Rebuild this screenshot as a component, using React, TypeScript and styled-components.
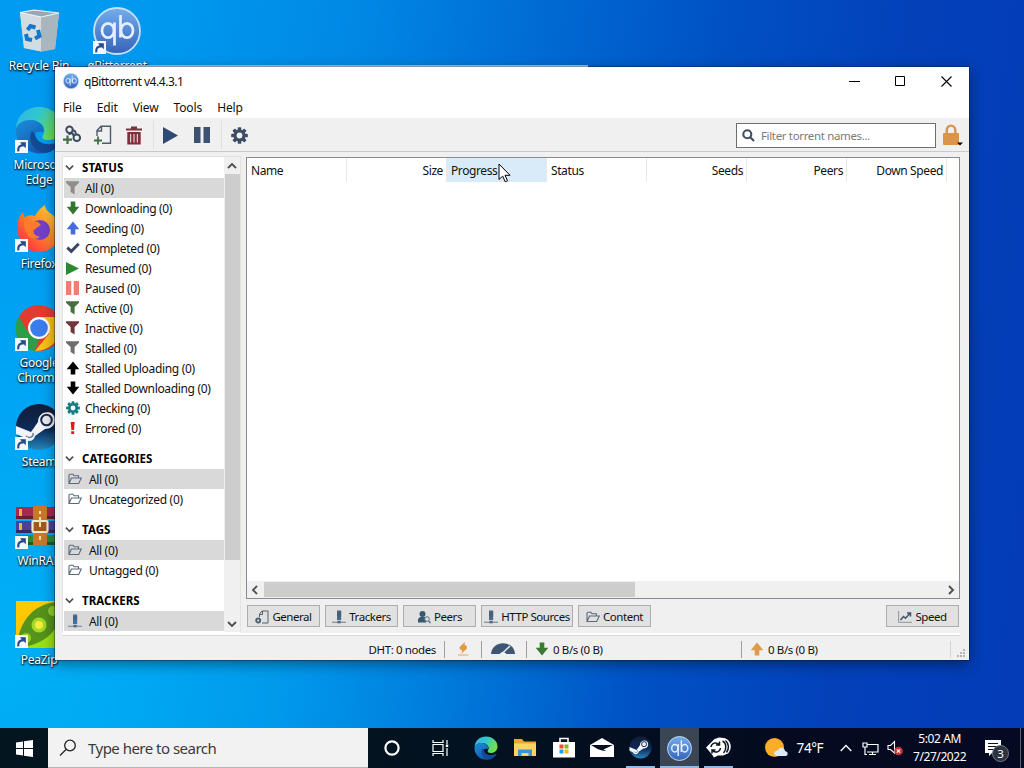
import React from "react";
import styled, { createGlobalStyle } from "styled-components";

const Global = createGlobalStyle`
  * { box-sizing: border-box; }
  html, body { margin: 0; padding: 0; width: 1024px; height: 768px; overflow: hidden; }
  body { font-family: "Noto Sans", "Open Sans", sans-serif; font-size: 12px; color: #111; }
  svg { display: block; flex: none; }
`;

/* ---------- desktop ---------- */
const Screen = styled.div`
  width: 1024px;
  height: 768px;
  display: flex;
  flex-direction: column;
  overflow: hidden;
`;
const Desktop = styled.main`
  position: relative;
  flex: 1;
  overflow: hidden;
  background: linear-gradient(97deg, #009cf2 0%, #0098ef 16%, #0087e4 33%, #0069d2 50%, #0050c3 66%, #0341b9 82%, #033cb6 100%);
  &::before {
    content: "";
    position: absolute;
    inset: 0;
    background: radial-gradient(ellipse 620px 520px at 0px 660px, rgba(0, 190, 250, 0.6), rgba(0, 180, 245, 0));
  }
`;
const Shortcut = styled.div<{ $x: number; $y: number }>`
  position: absolute;
  left: ${(p) => p.$x}px;
  top: ${(p) => p.$y}px;
  width: 78px;
  display: flex;
  flex-direction: column;
  align-items: center;
  gap: 3px;
`;
const ShortcutArt = styled.div`
  position: relative;
  width: 48px;
  height: 48px;
`;
const ArrowBadge = styled.svg`
  position: absolute;
  left: 0;
  bottom: 1px;
`;
const ShortcutLabel = styled.div`
  color: #fff;
  font-size: 12px;
  line-height: 15px;
  letter-spacing: -0.25px;
  text-align: center;
  white-space: pre-line;
  text-shadow: 0 1px 2px #000, 1px 1px 2px rgba(0, 0, 0, 0.8);
`;
const BackWindowEdge = styled.div`
  position: absolute;
  left: 88px;
  top: 65px;
  width: 500px;
  height: 20px;
  background: #fff;
  border-top: 1px solid #7cc3f0;
`;

/* ---------- application window ---------- */
const Window = styled.section`
  position: absolute;
  left: 55px;
  top: 67px;
  width: 914px;
  height: 593px;
  display: flex;
  flex-direction: column;
  background: #f0f0f0;
  box-shadow: 0 0 0 1px rgba(0, 25, 70, 0.4), 0 4px 13px rgba(0, 0, 0, 0.42);
`;
const TitleBar = styled.header`
  height: 30px;
  display: flex;
  align-items: center;
  gap: 5px;
  padding: 0 0 2px 8px;
  background: #fff;
`;
const Title = styled.div`
  flex: 1;
  letter-spacing: -0.46px;
`;
const CaptionButtons = styled.div`
  display: flex;
`;
const Caption = styled.button`
  width: 46px;
  height: 28px;
  border: 0;
  padding: 0;
  background: none;
  display: grid;
  place-items: center;
`;
const MenuBar = styled.nav`
  height: 21px;
  display: flex;
  align-items: center;
  gap: 15px;
  padding-left: 8px;
  background: #fff;
  letter-spacing: -0.12px;
`;
const ToolBar = styled.div`
  height: 34px;
  display: flex;
  align-items: center;
  padding: 1px 6px 0 7px;
  border-bottom: 1px solid #c9c9c9;
`;
const Tool = styled.div<{ $w: number }>`
  width: ${(p) => p.$w}px;
  display: flex;
`;
const ToolRule = styled.div`
  width: 1px;
  height: 28px;
  margin-right: 9px;
  background: #e0e0e0;
`;
const Filter = styled.div`
  width: 200px;
  height: 25px;
  margin-left: auto;
  display: flex;
  align-items: center;
  gap: 6px;
  padding-left: 5px;
  border: 1px solid #6e6e6e;
  background: #fff;
  color: #7a7a7a;
  font-size: 11.5px;
  letter-spacing: -0.35px;
`;
const LockButton = styled.div`
  width: 21px;
  margin-left: 6px;
`;
const Body = styled.div`
  height: 481px;
  display: flex;
  padding: 5px 9px 0 7px;
`;

/* ---------- sidebar ---------- */
const Sidebar = styled.aside`
  width: 179px;
  height: 477px;
  margin-top: -1px;
  display: flex;
  border: 1px solid #e2e2e2;
  border-bottom-color: #fff;
  background: #fff;
`;
const Groups = styled.div`
  width: 161px;
  padding: 1px 0 0 1px;
  display: flex;
  flex-direction: column;
  gap: 11px;
`;
const GroupTitle = styled.div`
  height: 20px;
  display: flex;
  align-items: center;
  gap: 8px;
  padding: 0 0 2px 1px;
  font-weight: 700;
  font-size: 11.5px;
  letter-spacing: 0.05px;
  color: #000;
`;
const Row = styled.div<{ $selected?: boolean; $wide?: boolean }>`
  height: 20px;
  display: flex;
  align-items: center;
  gap: ${(p) => (p.$wide ? 7 : 5)}px;
  padding-left: ${(p) => (p.$wide ? 4 : 1)}px;
  background: ${(p) => (p.$selected ? "#d9d9d9" : "transparent")};
  letter-spacing: -0.34px;
  white-space: nowrap;
`;
const VScroll = styled.div`
  width: 16px;
  display: flex;
  flex-direction: column;
  align-items: center;
  background: #f0f0f0;
`;
const VThumb = styled.div`
  width: 15px;
  height: 386px;
  background: #cdcdcd;
`;
const Arrow = styled.div`
  height: 17px;
  width: 16px;
  display: grid;
  place-items: center;
`;
const Spacer = styled.div`
  flex: 1;
`;
const IconSlot = styled.span`
  width: 15px;
  display: grid;
  place-items: center;
`;

/* ---------- transfer list ---------- */
const Content = styled.div`
  margin-left: 5px;
  width: 714px;
`;
const Table = styled.div`
  height: 442px;
  display: flex;
  flex-direction: column;
  border: 1px solid #868b92;
  background: #fff;
`;
const HeadRow = styled.div`
  flex: 1;
  display: flex;
`;
const HeadCell = styled.div<{ $right?: boolean; $hover?: boolean }>`
  width: 100px;
  height: 24px;
  padding: 0 3px 0 4px;
  display: flex;
  align-items: center;
  justify-content: ${(p) => (p.$right ? "flex-end" : "flex-start")};
  background: ${(p) => (p.$hover ? "#d9ebf9" : "#fff")};
  border-right: 1px solid #e8e8e8;
  letter-spacing: -0.4px;
`;
const HScroll = styled.div`
  height: 17px;
  display: flex;
  align-items: center;
  justify-content: space-between;
  background: #f0f0f0;
`;
const HThumb = styled.div`
  width: 371px;
  height: 15px;
  margin: 0 auto 0 1px;
  background: #cdcdcd;
`;
const Tabs = styled.div`
  display: flex;
  gap: 5px;
  padding: 6px 1px 0 1px;
`;
const Tab = styled.button<{ $w?: number; $end?: boolean }>`
  width: ${(p) => p.$w ?? 73}px;
  height: 22px;
  margin-left: ${(p) => (p.$end ? "auto" : "0")};
  display: flex;
  align-items: center;
  justify-content: center;
  gap: 3px;
  padding: 1px 0 0;
  border: 1px solid #adadad;
  background: #e1e1e1;
  color: #111;
  font: inherit;
  font-size: 11.5px;
  letter-spacing: -0.45px;
  white-space: nowrap;
`;

/* ---------- status bar ---------- */
const StatusRule = styled.div`
  height: 3px;
  margin: 0 9px 0 7px;
  background: #fff;
  border-bottom: 1px solid #d8d8d8;
`;
const StatusBar = styled.footer`
  flex: 1;
  display: flex;
  align-items: center;
  padding: 2px 3px 0 0;
`;
const Status = styled.div<{ $w: number; $right?: boolean; $faint?: boolean }>`
  width: ${(p) => p.$w}px;
  height: 17px;
  display: flex;
  align-items: center;
  gap: 4px;
  padding: 0 8px;
  justify-content: ${(p) => (p.$right ? "flex-end" : "flex-start")};
  border-right: 1px solid ${(p) => (p.$faint ? "#d4d4d4" : "#a0a0a0")};
  font-size: 11.5px;
  letter-spacing: -0.38px;
`;

/* ---------- taskbar ---------- */
const TaskBar = styled.footer`
  height: 40px;
  display: flex;
  background: linear-gradient(90deg, #03151f 0%, #031220 45%, #040b20 75%, #030a22 100%);
  color: #fff;
`;
const TaskCell = styled.div<{ $w: number; $open?: boolean; $active?: boolean }>`
  width: ${(p) => p.$w}px;
  display: grid;
  place-items: center;
  background: ${(p) => (p.$active ? "#3a4653" : "transparent")};
  box-shadow: ${(p) => (p.$active ? "inset 0 -2px 0 #8abbea" : "none")};
  &::after {
    content: "";
    display: ${(p) => (p.$open ? "block" : "none")};
    width: 29px;
    height: 2px;
    background: #8abbea;
    align-self: end;
  }
  ${(p) => (p.$open ? "grid-template-rows: 38px 2px;" : "")}
`;
const Search = styled.div`
  width: 320px;
  display: flex;
  align-items: center;
  gap: 11px;
  padding-left: 11px;
  background: #f2f2f2;
  border-bottom: 1px solid #b5b5b5;
  color: #3a3a3a;
  font-size: 15px;
  letter-spacing: -0.52px;
`;
const Apps = styled.div`
  display: flex;
  padding-left: 3px;
`;
const Tray = styled.div`
  flex: 1;
  display: flex;
  align-items: center;
  padding-left: 26px;
`;
const Temp = styled.div`
  width: 44px;
  padding-left: 9px;
  font-size: 13.5px;
  letter-spacing: -0.4px;
  white-space: nowrap;
`;
const TrayIcon = styled.div<{ $w: number; $end?: boolean }>`
  width: ${(p) => p.$w}px;
  display: grid;
  align-items: center;
  justify-items: ${(p) => (p.$end ? "end" : "center")};
`;
const Clock = styled.div`
  width: 64px;
  text-align: center;
  font-size: 12px;
  line-height: 18px;
  letter-spacing: -0.42px;
  white-space: nowrap;
`;
const Peek = styled.div`
  width: 1px;
  height: 40px;
  margin-left: 10px;
  background: #5b6272;
`;
const Pointer = styled.svg`
  position: absolute;
  left: 498px;
  top: 163px;
`;

/* ---------- icons ---------- */
const Chevron = ({ d = "down", s = 10, c = "#505050" }: { d?: string; s?: number; c?: string }) => {
  const paths: Record<string, string> = {
    down: "M1 3l4 4 4-4",
    up: "M1 7l4-4 4 4",
    left: "M7 1L3 5l4 4",
    right: "M3 1l4 4-4 4",
  };
  return (
    <svg width={s} height={s} viewBox="0 0 10 10" fill="none" stroke={c} strokeWidth="1.9">
      <path d={paths[d]} />
    </svg>
  );
};
const Funnel = ({ c }: { c: string }) => (
  <svg width="15" height="16" viewBox="0 0 15 16" fill={c}>
    <path d="M1 1.200h13v1.600L9.600 7v7.500L5.600 12V7L1 2.800z" />
  </svg>
);
const FatArrow = ({ c, up, s = 14 }: { c: string; up?: boolean; s?: number }) => (
  <svg width={s} height={s} viewBox="0 0 14 14" fill={c}>
    <path d="M4.700.5h4.600v5.300H13.300L7 13.500.7 5.800h4z" transform={up ? "rotate(180 7 7)" : undefined} />
  </svg>
);
const Gear = ({ c, s, hole }: { c: string; s: number; hole: string }) => (
  <svg width={s} height={s} viewBox="-10 -10 20 20">
    <g fill={c}>
      {[0, 45, 90, 135].map((a) => (
        <rect key={a} x="-2.100" y="-9.800" width="4.200" height="19.600" rx="1" transform={`rotate(${a})`} />
      ))}
    </g>
    <circle r="5" fill="none" stroke={c} strokeWidth="4" />
    <circle r="3.400" fill={hole} />
  </svg>
);
const Check = () => (
  <svg width="14" height="14" viewBox="0 0 14 14">
    <path d="M1.300 6.600l4 3.800 7.400-7.600" fill="none" stroke="#3d4763" strokeWidth="3" />
  </svg>
);
const Play = ({ c, w, h }: { c: string; w: number; h: number }) => (
  <svg width={w} height={h} viewBox="0 0 14 14" preserveAspectRatio="none" fill={c}>
    <path d="M0 0l14 7L0 14z" />
  </svg>
);
const Pause = ({ c, w, h }: { c: string; w: number; h: number }) => (
  <svg width={w} height={h} viewBox="0 0 14 14" preserveAspectRatio="none" fill={c}>
    <path d="M0 0h5.700v14H0zM8.300 0H14v14H8.300z" />
  </svg>
);
const Bang = () => (
  <svg width="15" height="14" viewBox="0 0 15 14" fill="#e0191f">
    <path d="M5.700 1h4l-.7 8H6.400zM6.200 10.300h3v2.700h-3z" />
  </svg>
);
const Folder = () => (
  <svg width="14" height="12" viewBox="0 0 14 12" fill="none" stroke="#5a6a7c" strokeWidth="1.100">
    <path d="M1 10V2.200l1-1h3l1 1.500h4.500V5M1 10.500L3.500 5H13.300l-2.600 5.500z" />
  </svg>
);
const Tracker = ({ c = "#41719f" }: { c?: string }) => (
  <svg width="14" height="14" viewBox="0 0 14 14">
    <path d="M5 .500h4.200v9.500H5z" fill={c} />
    <path d="M5 3h4.200M5 5h4.200" stroke="#345778" strokeWidth=".7" />
    <path d="M0 12.300h14" stroke="#8195a8" strokeWidth="1.300" />
    <path d="M5.500 10.800h3.200v2.500H5.500z" fill="#4d6781" />
  </svg>
);
const AddLink = () => (
  <svg width="20" height="20" viewBox="0 0 20 20" fill="none">
    <g stroke="#3c4a61" strokeWidth="2">
      <circle cx="7.500" cy="4.800" r="3.200" />
      <circle cx="14.800" cy="12.800" r="3.300" />
      <path d="M7.500 10c0-2.500 4-2.500 4 1M10.500 5.500c3 0 3.500 1.500 3 3.500" />
    </g>
    <path d="M5.500 10.500v8.500M1 14.700h9" stroke="#3e7048" strokeWidth="2.200" />
  </svg>
);
const AddFile = () => (
  <svg width="20" height="20" viewBox="0 0 20 20" fill="none">
    <path d="M3 11V5.500L7 1.200h9.500v17H8M3 6h4.500V1.500" stroke="#4c5c6c" strokeWidth="1.400" />
    <path d="M4 11.500v8M0 15.500h8" stroke="#3e7048" strokeWidth="1.800" />
  </svg>
);
const Trash = () => (
  <svg width="16" height="19" viewBox="0 0 16 19" fill="#80303c">
    <path d="M0 2.500h5V.5h6v2h5v2H0zM1.300 6h13.400v12.500H1.300z" />
    <path d="M4.600 8v8.500M8 8v8.500M11.400 8v8.500" stroke="#e3d0d3" strokeWidth="1.200" />
  </svg>
);
const Magnifier = () => (
  <svg width="13" height="13" viewBox="0 0 13 13" fill="none" stroke="#3f4e63" strokeWidth="2.100">
    <circle cx="5.300" cy="5.300" r="4" />
    <path d="M8.200 8.200l3.800 3.800" />
  </svg>
);
const Lock = () => (
  <svg width="21" height="22" viewBox="0 0 21 22">
    <path d="M4.700 10V6.500C4.700 0 13.300 0 13.300 6.500V10" fill="none" stroke="#d9934a" strokeWidth="2.400" />
    <rect x="1" y="9" width="16" height="12" rx="1" fill="#dc944b" />
    <path d="M15 18.500h6l-3 3z" fill="#000" />
  </svg>
);
const QbLogo = ({ s }: { s: number }) => (
  <svg width={s} height={s} viewBox="0 0 48 48">
    <defs>
      <linearGradient id="qb" x1="0" y1="0" x2="0" y2="1">
        <stop offset="0" stopColor="#73adee" />
        <stop offset="1" stopColor="#3563b8" />
      </linearGradient>
    </defs>
    <circle cx="24" cy="24" r="23" fill="url(#qb)" stroke="#c5e0fa" strokeWidth="1.800" />
    <g fill="none" stroke="#e4f0ff" strokeWidth="2.700">
      <ellipse cx="15" cy="23.500" rx="6" ry="7.200" />
      <path d="M21.500 15.500v23M27.500 8v22.500" />
      <ellipse cx="34" cy="23.500" rx="6" ry="7.200" />
    </g>
  </svg>
);
const EdgeLogo = ({ s }: { s: number }) => (
  <svg width={s} height={s} viewBox="0 0 48 48">
    <defs>
      <linearGradient id="e1" x1="0" y1="0" x2="1" y2=".4">
        <stop offset="0" stopColor="#2bb5e8" />
        <stop offset=".5" stopColor="#31c7cf" />
        <stop offset="1" stopColor="#6ee04c" />
      </linearGradient>
      <linearGradient id="e2" x1="0" y1="0" x2=".6" y2="1">
        <stop offset="0" stopColor="#1b8fdd" />
        <stop offset="1" stopColor="#1557ad" />
      </linearGradient>
    </defs>
    <path d="M1 22C2 9 12 1 24 1c13 0 23 9 23 20 0 8-6 13-13 13-6 0-8-2-6-5 5-8-4-15-12-15C8 14 3 18 1 22z" fill="url(#e1)" />
    <path d="M1 23c2-6 8-9 14-9 9 0 15 6 13 12-9-2-14 5-10 12 3 5 8 8 13 9C15 50 0 39 1 23z" fill="url(#e2)" />
    <path d="M17 25c-5 9 1 21 14 22 6-1 11-5 14-10 1-2-1-2-2-1-11 5-22 1-23-8z" fill="#124993" />
  </svg>
);
const SteamLogo = ({ s }: { s: number }) => (
  <svg width={s} height={s} viewBox="0 0 48 48">
    <defs>
      <linearGradient id="st" x1="0" y1="0" x2="0" y2="1">
        <stop offset="0" stopColor="#101d38" />
        <stop offset=".55" stopColor="#0c2a58" />
        <stop offset="1" stopColor="#2587bd" />
      </linearGradient>
    </defs>
    <circle cx="24" cy="24" r="23" fill="url(#st)" />
    <path d="M1 23l15 6 7-10c0-12 17-13 17-2 0 6-5 9-10 9l-10 7c-1 6-9 7-12 1L1 31z" fill="#f1f3f6" />
    <circle cx="31.500" cy="17" r="5.300" fill="#e9edf2" stroke="#17294d" strokeWidth="2" />
    <path d="M11 33c3 3 8 1 7-3" fill="none" stroke="#6d7a90" strokeWidth="1.500" />
  </svg>
);
const RecycleBin = () => (
  <svg width="48" height="48" viewBox="0 0 48 48">
    <path d="M5 5.500L19 3l25 3-4 36-13 2.500L9 41z" fill="#c4ced4" />
    <path d="M5 5.500l21 4.500v34.500L9 41z" fill="#d3dce1" />
    <path d="M26 10l18-4-4 36-14 2.500z" fill="#a9b6be" />
    <path d="M5 5.500L19 3l25 3-18 4z" fill="#9aa8b0" stroke="#eef4f7" strokeWidth="1.200" />
    <path d="M12.500 23l3-4 5 1.500M23 23l1.500 6-4.500 2.500M17 33l-5-1-1-5" fill="none" stroke="#1477c9" strokeWidth="4" />
  </svg>
);
const FirefoxLogo = () => (
  <svg width="48" height="48" viewBox="0 0 48 48">
    <defs>
      <linearGradient id="ff" x1="1" y1="0" x2="0" y2="1">
        <stop offset="0" stopColor="#ffe04a" />
        <stop offset=".4" stopColor="#ff9a29" />
        <stop offset=".75" stopColor="#ff4b3a" />
        <stop offset="1" stopColor="#e8237d" />
      </linearGradient>
    </defs>
    <path d="M3 16c1-4 3-7 5-9 0 3 1 4 2 5 4-2 7-2 10-1 3-6 7-9 10-11 0 7 8 8 13 16 7 14-2 31-19 31C9 47 0 33 3 16z" fill="url(#ff)" />
    <circle cx="25" cy="25" r="10" fill="#7340c9" />
    <path d="M9 14c8 0 9 3 14 3l3 3-6 4c-4 3 0 7 5 8-9 5-17-2-16-18z" fill="#ff7b2b" />
  </svg>
);
const ChromeLogo = () => (
  <svg width="48" height="48" viewBox="0 0 48 48">
    <circle cx="24" cy="24" r="23" fill="#e33b2e" />
    <path d="M4 12.500L14 30l10 5-4 12C3 45-4 26 4 12.500z" fill="#2a9e48" />
    <path d="M24 13h20.200C51 29 39 47 20 47l14-17z" fill="#fbc116" />
    <circle cx="24" cy="24" r="11" fill="#fff" />
    <circle cx="24" cy="24" r="8.800" fill="#3b7ded" />
  </svg>
);
const WinrarLogo = () => (
  <svg width="48" height="48" viewBox="0 0 48 48">
    <path d="M1 5h46v12H1z" fill="#a62a4a" />
    <path d="M1 19h46v12H1z" fill="#4a4298" />
    <path d="M1 33h46v10H1z" fill="#2d8a40" />
    <path d="M1 14h46v3H1zM1 28h46v3H1zM1 40h46v3H1z" fill="#000" opacity=".35" />
    <path d="M4 7h3v7H4zM4 21h3v7H4z" fill="#efb62e" />
    <path d="M18 4h14v39H18z" fill="#c9782a" />
    <rect x="17.500" y="19" width="15" height="11" rx="1" fill="#a05a20" stroke="#f3ead2" strokeWidth="2.200" />
    <path d="M25 9v3M25 15v10M25 34v4" stroke="#f6e0a0" strokeWidth="2" />
  </svg>
);
const PeazipLogo = () => (
  <svg width="48" height="48" viewBox="0 0 48 48">
    <path d="M1 0h47v47H1z" fill="#ffc800" />
    <path d="M1 47L48 0v47z" fill="#9be014" />
    <path d="M1 47C5 18 18 2 48 0c-1 28-16 44-47 47z" fill="#55931a" />
    <circle cx="24" cy="24" r="7.500" fill="#a4d829" />
    <circle cx="24" cy="24" r="4" fill="#f5ed3d" />
    <circle cx="38" cy="10" r="5" fill="#90cb2a" />
    <circle cx="11" cy="37" r="5" fill="#90cb2a" />
  </svg>
);

const shortcuts: { name: string; x: number; y: number; art: React.ReactNode; badge: boolean }[] = [
  { name: "Recycle Bin", x: 0, y: 7, art: <RecycleBin />, badge: false },
  { name: "qBittorrent", x: 78, y: 7, art: <QbLogo s={48} />, badge: true },
  { name: "Microsoft\nEdge", x: 0, y: 106, art: <EdgeLogo s={48} />, badge: true },
  { name: "Firefox", x: 0, y: 205, art: <FirefoxLogo />, badge: true },
  { name: "Google\nChrome", x: 0, y: 304, art: <ChromeLogo />, badge: true },
  { name: "Steam", x: 0, y: 403, art: <SteamLogo s={48} />, badge: true },
  { name: "WinRAR", x: 0, y: 502, art: <WinrarLogo />, badge: true },
  { name: "PeaZip", x: 0, y: 601, art: <PeazipLogo />, badge: true },
];

const statuses: [string, React.ReactNode][] = [
  ["All", <Funnel c="#8f8d86" />],
  ["Downloading", <FatArrow c="#34752f" />],
  ["Seeding", <FatArrow c="#4669e0" up />],
  ["Completed", <Check />],
  ["Resumed", <Play c="#2a8a30" w={13} h={13} />],
  ["Paused", <Pause c="#ee7f73" w={13} h={14} />],
  ["Active", <Funnel c="#45703f" />],
  ["Inactive", <Funnel c="#71353c" />],
  ["Stalled", <Funnel c="#6e6e6e" />],
  ["Stalled Uploading", <FatArrow c="#000" up />],
  ["Stalled Downloading", <FatArrow c="#000" />],
  ["Checking", <Gear c="#137f82" s={14} hole="#fff" />],
  ["Errored", <Bang />],
];

const groups: { title: string; rows: [string, React.ReactNode][] }[] = [
  { title: "CATEGORIES", rows: [["All", <Folder />], ["Uncategorized", <Folder />]] },
  { title: "TAGS", rows: [["All", <Folder />], ["Untagged", <Folder />]] },
  { title: "TRACKERS", rows: [["All", <Tracker />]] },
];

const columns = [
  { name: "Name" },
  { name: "Size", right: true },
  { name: "Progress", hover: true },
  { name: "Status" },
  { name: "Seeds", right: true },
  { name: "Peers", right: true },
  { name: "Down Speed", right: true },
];

const SideGroup = ({ title, children }: { title: string; children: React.ReactNode }) => (
  <div>
    <GroupTitle>
      <Chevron s={9} />
      {title}
    </GroupTitle>
    {children}
  </div>
);

export default function App() {
  return (
    <Screen>
      <Global />
      <Desktop>
        {shortcuts.map((s) => (
          <Shortcut key={s.name} $x={s.x} $y={s.y}>
            <ShortcutArt>
              {s.art}
              {s.badge && (
                <ArrowBadge width="13" height="13" viewBox="0 0 12 12">
                  <path d="M0 0h12v12H0z" fill="#f4f6f8" />
                  <path d="M3 10.500c-.5-4 1.500-5.500 4-5.500V2.500" fill="none" stroke="#24498c" strokeWidth="2" />
                  <path d="M4.500 2H10v5.500z" fill="#24498c" />
                </ArrowBadge>
              )}
            </ShortcutArt>
            <ShortcutLabel>{s.name}</ShortcutLabel>
          </Shortcut>
        ))}
        <BackWindowEdge />

        <Window>
          <TitleBar>
            <QbLogo s={16} />
            <Title>qBittorrent v4.4.3.1</Title>
            <CaptionButtons>
              <Caption>
                <svg width="11" height="11" viewBox="0 0 11 11"><path d="M0 5.500h11" stroke="#000" /></svg>
              </Caption>
              <Caption>
                <svg width="11" height="11" viewBox="0 0 11 11"><path d="M.5.500h9v9h-9z" fill="none" stroke="#000" /></svg>
              </Caption>
              <Caption>
                <svg width="11" height="11" viewBox="0 0 11 11"><path d="M.5.500l10 10M10.500.500l-10 10" stroke="#000" strokeWidth="1.100" /></svg>
              </Caption>
            </CaptionButtons>
          </TitleBar>
          <MenuBar>
            {["File", "Edit", "View", "Tools", "Help"].map((m) => (
              <span key={m}>{m}</span>
            ))}
          </MenuBar>
          <ToolBar>
            <Tool $w={32}><AddLink /></Tool>
            <Tool $w={32}><AddFile /></Tool>
            <Tool $w={27}><Trash /></Tool>
            <ToolRule />
            <Tool $w={31}><Play c="#304a73" w={15} h={17} /></Tool>
            <Tool $w={27}><Pause c="#3d5273" w={16} h={16} /></Tool>
            <ToolRule />
            <Tool $w={20}><Gear c="#3d4c64" s={17} hole="#f0f0f0" /></Tool>
            <Filter>
              <Magnifier />
              Filter torrent names...
            </Filter>
            <LockButton><Lock /></LockButton>
          </ToolBar>

          <Body>
            <Sidebar>
              <Groups>
                <SideGroup title="STATUS">
                  {statuses.map(([name, icon], i) => (
                    <Row key={name} $selected={i === 0}>
                      <IconSlot>{icon}</IconSlot>
                      {name} (0)
                    </Row>
                  ))}
                </SideGroup>
                {groups.map((g) => (
                  <SideGroup key={g.title} title={g.title}>
                    {g.rows.map(([name, icon], i) => (
                      <Row key={name} $selected={i === 0} $wide>
                        {icon}
                        {name} (0)
                      </Row>
                    ))}
                  </SideGroup>
                ))}
              </Groups>
              <VScroll>
                <Arrow><Chevron d="up" /></Arrow>
                <VThumb />
                <Spacer />
                <Arrow><Chevron /></Arrow>
              </VScroll>
            </Sidebar>
            <Content>
              <Table>
                <HeadRow>
                  {columns.map((c) => (
                    <HeadCell key={c.name} $right={c.right} $hover={c.hover}>{c.name}</HeadCell>
                  ))}
                </HeadRow>
                <HScroll>
                  <Arrow><Chevron d="left" /></Arrow>
                  <HThumb />
                  <Arrow><Chevron d="right" /></Arrow>
                </HScroll>
              </Table>
              <Tabs>
                <Tab>
                  <svg width="14" height="14" viewBox="0 0 14 14" fill="none" stroke="#4f6070">
                    <path d="M4.500 7V4L7 1h6v12H7M5 4.500h2.500V1" />
                    <circle cx="3.200" cy="10.500" r="2" strokeWidth="1.900" />
                  </svg>
                  General
                </Tab>
                <Tab><Tracker c="#4d6781" />Trackers</Tab>
                <Tab>
                  <svg width="14" height="14" viewBox="0 0 14 14" fill="#355a70">
                    <circle cx="5.500" cy="4" r="3" />
                    <path d="M1 12.500V9l2-2h5l1 1v4.500z" />
                    <circle cx="10" cy="9" r="2.300" fill="#dfe6ea" stroke="#5b7383" />
                    <path d="M11.500 11l2 2" stroke="#5b7383" strokeWidth="1.400" />
                  </svg>
                  Peers
                </Tab>
                <Tab $w={92}><Tracker c="#4d6781" />HTTP Sources</Tab>
                <Tab><Folder />Content</Tab>
                <Tab $end>
                  <svg width="14" height="12" viewBox="0 0 14 12" fill="none" stroke="#44546a">
                    <path d="M.6 0v11.300H14" stroke="#8a94a0" />
                    <path d="M2.500 9l3-3.500 2 1.800 4.500-5M9 2h3.500v3.500" strokeWidth="1.500" />
                  </svg>
                  Speed
                </Tab>
              </Tabs>
            </Content>
          </Body>

          <StatusRule />
          <StatusBar>
            <Status $w={390} $right>DHT: 0 nodes</Status>
            <Status $w={37}>
              <svg width="20" height="16" viewBox="0 0 20 16" fill="#e49a43">
                <path d="M12 1L6.500 6l.500 2.500 2 .500L8.500 12.500 14 7.500 13.500 4.500 11.500 4z" />
                <path d="M5 14h10.500" stroke="#e8b878" strokeWidth="1.300" />
              </svg>
            </Status>
            <Status $w={45}>
              <svg width="26" height="14" viewBox="0 0 26 14">
                <path d="M1 12C2-2.500 24-2.500 25 12z" fill="#3c5674" />
                <path d="M12 11.500L20 4" stroke="#e8edf2" strokeWidth="1.500" />
                <path d="M9.500 12.500c1-3.500 6-3.500 7 0z" fill="#f0f0f0" />
              </svg>
            </Status>
            <Status $w={215}><FatArrow c="#3b7a32" />0 B/s (0 B)</Status>
            <Status $w={209} $faint><FatArrow c="#dd9b4e" up />0 B/s (0 B)</Status>
            <Spacer />
            <svg width="10" height="18" viewBox="0 0 10 18" fill="#b5b5b5">
              <path d="M7 9h2v2H7zM4 12h2v2H4zM7 12h2v2H7zM1 15h2v2H1zM4 15h2v2H4zM7 15h2v2H7z" />
            </svg>
          </StatusBar>
        </Window>

        <Pointer width="13" height="20" viewBox="0 0 13 20">
          <path d="M1 1v15.500l3.700-3.400 2.500 5.700 2.300-1-2.500-5.500H12z" fill="#fff" stroke="#000" />
        </Pointer>
      </Desktop>

      <TaskBar>
        <TaskCell $w={48}>
          <svg width="17" height="17" viewBox="0 0 17 17" fill="#fff">
            <path d="M0 2.400l7-1V8H0zM8 1.200L17 0v8H8zM0 9h7v6.600l-7-1zM8 9h9v8l-9-1.200z" />
          </svg>
        </TaskCell>
        <Search>
          <svg width="18" height="18" viewBox="0 0 18 18" fill="none" stroke="#222" strokeWidth="1.300">
            <circle cx="11" cy="6.500" r="5.300" />
            <path d="M7 10.500L1 16.500" />
          </svg>
          Type here to search
        </Search>
        <TaskCell $w={48}>
          <svg width="16" height="16" viewBox="0 0 16 16"><circle cx="8" cy="8" r="6.600" fill="none" stroke="#fff" strokeWidth="2.200" /></svg>
        </TaskCell>
        <TaskCell $w={48}>
          <svg width="17" height="16" viewBox="0 0 17 16" fill="none" stroke="#fff" strokeWidth="1.200">
            <path d="M1 4.500h10v7H1zM1 0v2.500h10V0M1 16v-2.500h10V16M15 0v4M15 8v8" />
            <path d="M13.800 4.500h2.400V7h-2.400z" fill="#fff" stroke="none" />
          </svg>
        </TaskCell>
        <Apps>
          <TaskCell $w={38.67}><EdgeLogo s={24} /></TaskCell>
          <TaskCell $w={38.67}>
            <svg width="22" height="20" viewBox="0 0 22 20">
              <path d="M0 1h8l2 2.500h12V18H0z" fill="#e9a92d" />
              <path d="M0 5.500h22V18H0z" fill="#fcd463" />
              <path d="M4 18v-6.500h14V18h-3.500v-3h-7v3z" fill="#3793dc" />
            </svg>
          </TaskCell>
          <TaskCell $w={38.67}>
            <svg width="22" height="22" viewBox="0 0 22 22">
              <path d="M7 5.500V1.500h8v4" fill="none" stroke="#fff" strokeWidth="1.600" />
              <path d="M0 5h22v15.500H0z" fill="#fff" />
              <path d="M6.500 7.500h4v4h-4z" fill="#ee5026" />
              <path d="M11.500 7.500h4v4h-4z" fill="#7db928" />
              <path d="M6.500 12.500h4v4h-4z" fill="#1aa3e8" />
              <path d="M11.500 12.500h4v4h-4z" fill="#f8b41c" />
            </svg>
          </TaskCell>
          <TaskCell $w={38.67}>
            <svg width="24" height="20" viewBox="0 0 24 20">
              <path d="M0 7L12 0l12 7v12H0z" fill="#fff" />
              <path d="M1 7h22l-9.500 4.500 3 1.500L12 12.500 7.500 11z" fill="#06111f" />
            </svg>
          </TaskCell>
          <TaskCell $w={38.67} $open><SteamLogo s={23} /></TaskCell>
          <TaskCell $w={38.67} $active><QbLogo s={25} /></TaskCell>
          <TaskCell $w={38.67} $open>
            <svg width="25" height="22" viewBox="0 0 25 22">
              <path d="M0 11.500L8.500 3 13 1.500l5 .5c7 1.500 9 10 4 15.500l-5 2H12l-4 2-2-3z" fill="#fff" />
              <path d="M5 11c.5-4 5-5.500 8-2.500M14.500 12c-.5 4-5 5.500-8 2.500M13.500 5.500v3.500H10M6 17.500V14h3.500M16.500 5c4 2 4.500 8 1 12M19.500 4.500c4 3.500 3.500 8.500 1 12" fill="none" stroke="#0b1320" strokeWidth="1.500" />
            </svg>
          </TaskCell>
        </Apps>
        <Tray>
          <svg width="24" height="22" viewBox="0 0 24 22">
            <circle cx="10.500" cy="10.500" r="9.500" fill="#f9ad28" />
            <path d="M13 19c-5-1-3-6 1-5.500C16 9 21 11 21 14c4 1 3 5 0 5z" fill="#dbeaf8" />
          </svg>
          <Temp>74°F</Temp>
          <TrayIcon $w={28}>
            <svg width="12" height="8" viewBox="0 0 12 8" fill="none" stroke="#fff" strokeWidth="1.300"><path d="M.7 7L6 1.500 11.300 7" /></svg>
          </TrayIcon>
          <TrayIcon $w={22}>
            <svg width="17" height="15" viewBox="0 0 17 15" fill="none" stroke="#fff" strokeWidth="1.200">
              <path d="M5 3.500h11v7.500H5M10.500 11v2.500M7 13.500h7M1 2h4v4H1zM3 6v7.500h2" />
            </svg>
          </TrayIcon>
          <TrayIcon $w={26}>
            <svg width="16" height="16" viewBox="0 0 16 16" fill="none" stroke="#fff">
              <path d="M1 5.500h2.500l4-4V13l-4-3.500H1z" strokeWidth="1.100" />
              <circle cx="11.500" cy="11" r="4.300" fill="#cf3038" stroke="none" />
              <path d="M9.800 9.300l3.400 3.400M13.200 9.300l-3.400 3.400" strokeWidth="1.100" />
            </svg>
          </TrayIcon>
          <Clock>
            5:02 AM
            <br />
            7/27/2022
          </Clock>
          <TrayIcon $w={38} $end>
            <svg width="26" height="28" viewBox="0 0 26 28">
              <path d="M1 6h16v13H8l-3 3v-3H1z" fill="#fff" />
              <path d="M4 9.500h10M4 12.500h10M4 15.500h6" stroke="#081124" strokeWidth="1.200" />
              <circle cx="16.500" cy="19.500" r="8" fill="#2b3240" stroke="#737a86" />
              <text x="16.500" y="23.800" textAnchor="middle" fill="#fff" fontSize="11.500">3</text>
            </svg>
          </TrayIcon>
          <Peek />
        </Tray>
      </TaskBar>
    </Screen>
  );
}
